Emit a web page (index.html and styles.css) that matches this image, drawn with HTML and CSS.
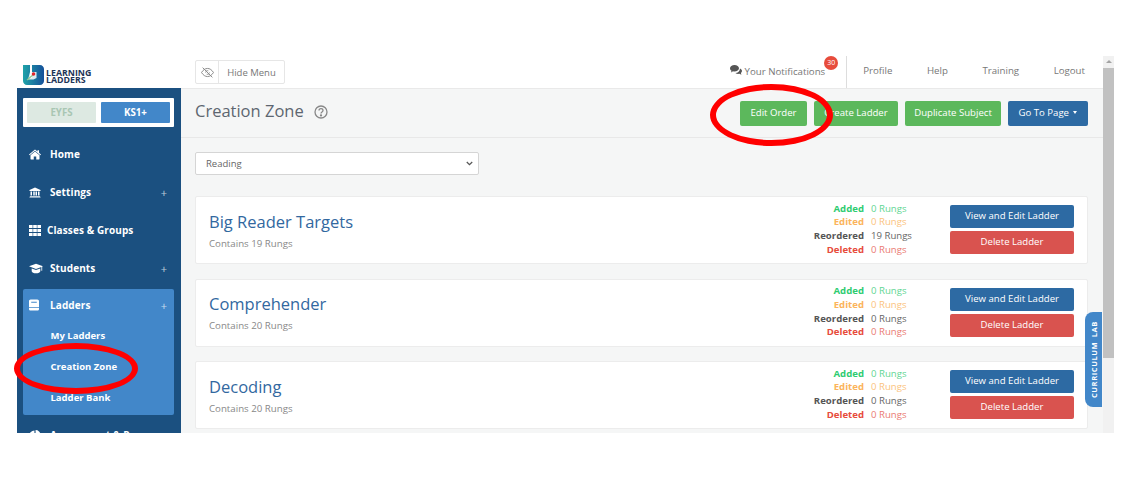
FILE: index.html
```html
<!DOCTYPE html>
<html lang="en">
<head>
<meta charset="utf-8">
<title>Creation Zone</title>
<link rel="stylesheet" href="styles.css">
</head>
<body>
<div class="frame">
  <div class="app">
    <header class="top">
      <div class="logo">
        <svg width="21" height="21" viewBox="0 0 21 21"><defs><linearGradient id="lg" x1="0" y1="0" x2="1" y2="0"><stop offset="0" stop-color="#1fa3a8"/><stop offset="1" stop-color="#15509a"/></linearGradient></defs><path d="M0 1h7v13h2V1h8c2.200 0 4 1.800 4 4v12c0 2.200-1.800 4-4 4H4c-2.200 0-4-1.800-4-4z" fill="url(#lg)"/><path d="M7 8h6.500v6l-3 1.500H5z" fill="#fff" opacity=".85"/><path d="M4 16l7-6" stroke="#8ecb8f" stroke-width="1.200"/><circle cx="10.500" cy="10" r="1.800" fill="#e0242c"/></svg>
        <div class="logo-text"><span>LEARNING</span><span>LADDERS</span></div>
      </div>
      <button class="hide-menu">
        <span class="hide-icon"><svg width="13" height="11" viewBox="0 0 24 20" fill="none" stroke="#8a8a8a" stroke-width="1.800"><path d="M1 10c3-5 7-7.500 11-7.500S20 5 23 10c-3 5-7 7.500-11 7.500S4 15 1 10z"/><path d="M8.500 10a3.500 3.500 0 0 1 5-3M15.500 10a3.500 3.500 0 0 1-5 3"/><path d="M3 1l18 18"/></svg></span>
        <span class="hide-label">Hide Menu</span>
      </button>
      <nav class="top-nav">
        <a class="notif"><svg width="12" height="10" viewBox="0 0 24 20" fill="#555"><path d="M9 0c5 0 9 3 9 6.500S14 13 9 13c-1 0-2 0-3-.3L2 15l1-3.500C1 10.300 0 8.500 0 6.500 0 3 4 0 9 0z"/><path d="M20 7c2 1 4 3 4 5 0 1.500-.8 3-2.200 4l1 3.500-4-2c-3 .8-6 0-8-1.500 5 0 9.200-3.500 9.200-9z"/></svg> Your Notifications<span class="badge">30</span></a>
        <a class="nav-link first">Profile</a>
        <a class="nav-link">Help</a>
        <a class="nav-link">Training</a>
        <a class="nav-link">Logout</a>
      </nav>
    </header>
    <div class="body">
      <aside class="side">
        <div class="switch"><span class="sw eyfs">EYFS</span><span class="sw ks">KS1+</span></div>
        <a class="item first-item"><svg class="ic" viewBox="0 0 24 20" fill="#fff"><path d="M12 4L3 11.500V19c0 .5.400 1 1 1h5.500v-6h5v6H20c.6 0 1-.5 1-1v-7.500z"/><path d="M12 0L0 10l1.300 1.500L12 2.600l10.700 8.900L24 10l-4-3.300V1.500h-3v2.700z"/></svg><b>Home</b></a>
        <a class="item"><svg class="ic" viewBox="0 0 24 20" fill="#fff"><path d="M12 0L1 5v2h22V5zM3 8h3v8H3zM8.500 8h3v8h-3zM13 8h3v8h-3zM18 8h3v8h-3zM2 17h20v1H2zM1 18.500h22V20H1z"/></svg><b>Settings</b><i>+</i></a>
        <a class="item tight"><svg class="ic" viewBox="0 0 20 18" fill="#fff"><path d="M0 0h6v5H0zM7 0h6v5H7zM14 0h6v5h-6zM0 6.500h6v5H0zM7 6.500h6v5H7zM14 6.500h6v5h-6zM0 13h6v5H0zM7 13h6v5H7zM14 13h6v5h-6z"/></svg><b>Classes &amp; Groups</b></a>
        <a class="item"><svg class="ic cap" viewBox="0 0 26 18" fill="#fff"><path d="M13 0L0 5l13 5 10-3.800V13h1.500V5.500L26 5z"/><path d="M5 9v5c0 2 4 4 8 4s8-2 8-4V9l-8 3z"/></svg><b>Students</b><i>+</i></a>
        <div class="group">
          <a class="item"><svg class="ic book" viewBox="0 0 18 20" fill="#fff"><path fill-rule="evenodd" d="M3 0h12c1.700 0 3 1.300 3 3v14c0 1.700-1.300 3-3 3H3c-1.700 0-3-1.300-3-3V3c0-1.700 1.300-3 3-3zm1 4v2h10V4zM0 14v1.500h18V14z"/></svg><b>Ladders</b><i>+</i></a>
          <a class="sub">My Ladders</a>
          <a class="sub">Creation Zone</a>
          <a class="sub">Ladder Bank</a>
        </div>
        <a class="item cut"><svg class="ic" viewBox="0 0 20 20" fill="#fff"><path d="M9 1v10h10A10 10 0 1 1 9 1z"/><path d="M11 0a9 9 0 0 1 9 9h-9z"/></svg><b>Assessment &amp; Progress</b></a>
      </aside>
      <main class="main">
        <div class="title-bar">
          <h1>Creation Zone</h1>
          <svg class="help" width="14" height="14" viewBox="0 0 14 14" fill="none" stroke="#888" stroke-width="1.300"><circle cx="7" cy="7" r="6"/><path d="M5 5.500c0-1.200 1-1.900 2-1.900s2 .7 2 1.800c0 1.500-2 1.500-2 3"/><circle cx="7" cy="10.400" r=".5" fill="#888"/></svg>
          <div class="actions">
            <a class="btn green">Edit Order</a>
            <a class="btn green">Create Ladder</a>
            <a class="btn green">Duplicate Subject</a>
            <a class="btn blue">Go To Page <span class="caret"></span></a>
          </div>
        </div>
        <div class="content">
          <div class="select-box"><span>Reading</span><svg width="7" height="5" viewBox="0 0 9 6" fill="none" stroke="#555" stroke-width="1.600"><path d="M1 1l3.500 3.500L8 1"/></svg></div>
          <section class="card">
            <div class="card-head"><h2>Big Reader Targets</h2><p>Contains 19 Rungs</p></div>
            <dl class="stats">
              <dt class="add">Added</dt><dd class="add">0 Rungs</dd>
              <dt class="edit">Edited</dt><dd class="edit">0 Rungs</dd>
              <dt class="re">Reordered</dt><dd class="re">19 Rungs</dd>
              <dt class="del">Deleted</dt><dd class="del">0 Rungs</dd>
            </dl>
            <div class="card-btns"><a class="wide blue">View and Edit Ladder</a><a class="wide red">Delete Ladder</a></div>
          </section>
          <section class="card">
            <div class="card-head"><h2>Comprehender</h2><p>Contains 20 Rungs</p></div>
            <dl class="stats">
              <dt class="add">Added</dt><dd class="add">0 Rungs</dd>
              <dt class="edit">Edited</dt><dd class="edit">0 Rungs</dd>
              <dt class="re">Reordered</dt><dd class="re">0 Rungs</dd>
              <dt class="del">Deleted</dt><dd class="del">0 Rungs</dd>
            </dl>
            <div class="card-btns"><a class="wide blue">View and Edit Ladder</a><a class="wide red">Delete Ladder</a></div>
          </section>
          <section class="card">
            <div class="card-head"><h2>Decoding</h2><p>Contains 20 Rungs</p></div>
            <dl class="stats">
              <dt class="add">Added</dt><dd class="add">0 Rungs</dd>
              <dt class="edit">Edited</dt><dd class="edit">0 Rungs</dd>
              <dt class="re">Reordered</dt><dd class="re">0 Rungs</dd>
              <dt class="del">Deleted</dt><dd class="del">0 Rungs</dd>
            </dl>
            <div class="card-btns"><a class="wide blue">View and Edit Ladder</a><a class="wide red">Delete Ladder</a></div>
          </section>
        </div>
        <div class="lab"><span>CURRICULUM LAB</span></div>
      </main>
    </div>
  </div>
  <div class="scrollbar"><span class="arrow"></span><span class="thumb"></span></div>
</div>
<div class="ring ring-order"></div>
<div class="ring ring-zone"></div>
</body>
</html>
```
FILE: styles.css
```css
* { box-sizing: border-box; }
html, body { margin: 0; padding: 0; background: #fff; }
body { width: 1147px; height: 484px; overflow: hidden; position: relative; font-family: "Open Sans", "Liberation Sans", sans-serif; color: #555; padding: 56px 0 0 17px; }
a { display: block; }
.frame { width: 1097px; height: 377px; display: flex; overflow: hidden; }
.app { width: 1086px; display: flex; flex-direction: column; }
.top { height: 32px; display: flex; align-items: center; background: #fff; flex: none; }
.logo { width: 164px; padding: 5px 0 0 6px; display: flex; align-items: center; gap: 2px; }
.logo-text { display: flex; flex-direction: column; font-size: 8.800px; line-height: 7px; font-weight: 700; color: #1d3557; padding-top: 5px; }
.hide-menu { margin-left: 14px; height: 24px; width: 90px; padding: 0; display: flex; align-items: center; background: #fff; border: 1px solid #e6e6e6; border-radius: 2px; font: inherit; font-size: 9.500px; color: #777; }
.hide-icon { width: 23px; height: 22px; display: flex; align-items: center; justify-content: center; border-right: 1px solid #e6e6e6; }
.hide-label { flex: 1; text-align: center; }
.top-nav { margin-left: auto; height: 32px; display: flex; align-items: center; font-size: 9.700px; color: #777; padding-right: 18px; }
.notif { position: relative; margin-right: 21px; color: #777; white-space: nowrap; padding-bottom: 2px; }
.badge { position: absolute; right: -13px; top: -9px; width: 14px; height: 14px; border-radius: 50%; background: #e74c3c; color: #fff; font-size: 7px; line-height: 14px; text-align: center; }
.nav-link { white-space: nowrap; padding-left: 34.500px; height: 32px; line-height: 30px; }
.nav-link.first { border-left: 1px solid #ddd; padding-left: 16px; }
.body { flex: 1; display: flex; min-height: 0; position: relative; }
.side { width: 164px; flex: none; background: #1b5080; padding: 10px 7px 0 6px; overflow: hidden; color: #fff; }
.switch { height: 29px; background: #fff; border-radius: 1px; padding: 4px; display: flex; gap: 5px; }
.sw { flex: 1; display: flex; align-items: center; justify-content: center; font-size: 9.700px; font-weight: 700; border-radius: 1px; }
.eyfs { background: #dde9e2; color: #a9c6b3; }
.ks { background: #4287c9; color: #fff; }
.item { height: 38px; display: flex; align-items: center; padding: 0 7px 0 6px; font-size: 10px; color: #fff; }
.first-item { margin-top: 8px; }
.item b { font-weight: 700; letter-spacing: .1px; white-space: nowrap; margin-left: 9px; }
.item i { margin-left: auto; font-style: normal; font-size: 11px; opacity: .7; }
.ic { width: 12px; height: 11px; flex: none; }
.tight b { margin-left: 6px; }
.cap { width: 14px; height: 11px; margin-right: -2px; }
.book { width: 10px; height: 12px; margin-right: 2px; }
.group { background: #4287c9; border-radius: 2px; height: 126px; margin-top: 2px; }
.group .item { height: 32px; }
.sub { padding-left: 27.500px; height: 31px; line-height: 30px; font-size: 9.500px; font-weight: 700; color: #fff; }
.cut { margin-top: 10px; height: 20px; }
.main { flex: 1; min-width: 0; background: #f5f6f6; border-top: 1px solid #e9e9e9; position: relative; }
.title-bar { height: 49px; display: flex; align-items: center; padding: 0 15px 0 14px; border-bottom: 1px solid #e8e8e8; }
h1 { margin: 0 0 5px; font-size: 16.500px; font-weight: 400; color: #5d6670; }
.help { margin-left: 10px; margin-bottom: 3px; }
.actions { margin-left: auto; display: grid; grid-template-columns: 67px 84px 96px 80px; gap: 7px; }
.btn { height: 25px; line-height: 24px; text-align: center; border-radius: 2px; font-size: 9.600px; color: #fff; white-space: nowrap; }
.green { background: #5cb85c; }
.blue { background: #2d6aa3; }
.red { background: #d9534f; }
.caret { display: inline-block; width: 0; height: 0; margin-left: 2px; vertical-align: middle; border-top: 3px solid #fff; border-left: 2.500px solid transparent; border-right: 2.500px solid transparent; }
.content { padding: 14px 15px 0 14px; }
.select-box { width: 284px; height: 23px; border: 1px solid #d5d5d5; border-radius: 2px; background: #fff; display: flex; align-items: center; justify-content: space-between; padding: 0 5px 0 10px; font-size: 9.500px; color: #666; margin-bottom: 21px; }
.card { height: 68px; margin-bottom: 14.500px; background: #fff; border: 1px solid #ececec; border-radius: 2px; display: flex; align-items: center; padding: 0 13px; }
.card-head { flex: 1; padding-top: 1px; }
h2 { margin: 0; font-size: 16.500px; line-height: 22px; font-weight: 400; color: #32689f; }
.card-head p { margin: 4px 0 0; font-size: 9.700px; line-height: 14px; color: #888; }
.stats { margin: 0 36px 2px 0; display: grid; grid-template-columns: 52px 43px; column-gap: 7px; font-size: 9.600px; line-height: 13.700px; }
.stats dt { text-align: right; font-weight: 700; margin: 0; }
.stats dd { margin: 0; white-space: nowrap; }
dt.add { color: #2ecc71; } dd.add { color: #5fd693; }
dt.edit { color: #fbb45c; } dd.edit { color: #fbc37d; }
dt.re { color: #555; } dd.re { color: #666; }
dt.del { color: #e74c3c; } dd.del { color: #ea7a72; }
.card-btns { width: 124px; display: flex; flex-direction: column; gap: 3px; margin-bottom: 1px; }
.wide { height: 23px; line-height: 22px; border-radius: 2px; text-align: center; font-size: 9.600px; color: #fff; }
.lab { position: absolute; right: 1px; top: 223px; width: 17px; height: 95px; background: #4287c9; border-radius: 8px 0 0 8px; display: flex; align-items: center; justify-content: center; }
.lab span { writing-mode: vertical-rl; transform: rotate(180deg); font-size: 7.500px; font-weight: 700; color: #fff; letter-spacing: .6px; word-spacing: 2px; white-space: nowrap; }
.scrollbar { width: 11px; flex: none; background: #f1f1f1; display: flex; flex-direction: column; }
.arrow { height: 12px; display: flex; justify-content: center; padding-top: 4px; }
.arrow::before { content: ""; width: 0; height: 0; border-bottom: 3px solid #a3a3a3; border-left: 3px solid transparent; border-right: 3px solid transparent; }
.thumb { height: 290px; background: #c1c1c1; }
.ring { position: absolute; border: 6px solid #f00; border-radius: 50%; pointer-events: none; }
.ring-order { left: 710px; top: 84px; width: 123px; height: 62px; }
.ring-zone { left: 14px; top: 343px; width: 124px; height: 51px; }
```
